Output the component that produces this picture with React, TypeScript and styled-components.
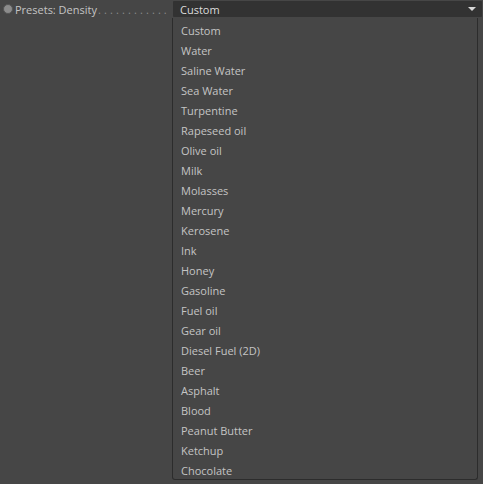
import React from "react";
import styled, { createGlobalStyle } from "styled-components";

const Global = createGlobalStyle`
  html, body { margin: 0; padding: 0; background: #464646; }
  body { width: 483px; height: 484px; overflow: hidden; font-family: "Open Sans", "Noto Sans", sans-serif; }
`;

const Page = styled.div`
  width: 483px;
  height: 484px;
  background: #464646;
  display: flex;
  align-items: flex-start;
  padding-top: 1px;
  box-sizing: border-box;
`;

const LabelArea = styled.div`
  width: 173px;
  height: 16px;
  display: flex;
  align-items: center;
  padding-left: 3px;
  box-sizing: border-box;
  overflow: hidden;
`;

const Dot = styled.span`
  width: 10px;
  height: 10px;
  border-radius: 50%;
  background: #8c8c8c;
  border: 1px solid #555555;
  box-sizing: border-box;
  flex: none;
`;

const Label = styled.span`
  margin-left: 2px;
  font-size: 11px;
  color: #c4c4c4;
  white-space: nowrap;
`;

const Dots = styled.span`
  margin-left: 1px;
  font-size: 11px;
  color: #8a8a8a;
  letter-spacing: 3.1px;
  white-space: nowrap;
`;

const SelectColumn = styled.div`
  display: flex;
  flex-direction: column;
  width: 309px;
`;

const Header = styled.div`
  height: 16px;
  background: #323232;
  display: flex;
  align-items: center;
  justify-content: space-between;
  padding: 0 6px 0 7px;
  color: #dcdcdc;
  font-size: 11px;
  border-radius: 1px;
`;

const Arrow = styled.span`
  width: 0;
  height: 0;
  border-left: 4px solid transparent;
  border-right: 4px solid transparent;
  border-top: 4px solid #d8d8d8;
`;

const Menu = styled.ul`
  list-style: none;
  margin: 1px 0 0 -1px;
  padding: 3px 0 0 0;
  width: 306px;
  height: 462px;
  box-sizing: border-box;
  border: 1px solid #2c2c2c;
  border-top: none;
  border-radius: 0 0 3px 3px;
  background: #464646;
`;

const Item = styled.li`
  height: 20px;
  line-height: 20px;
  padding-left: 8px;
  font-size: 11px;
  color: #c4c4c4;
`;

const items = [
  "Custom", "Water", "Saline Water", "Sea Water", "Turpentine", "Rapeseed oil",
  "Olive oil", "Milk", "Molasses", "Mercury", "Kerosene", "Ink", "Honey",
  "Gasoline", "Fuel oil", "Gear oil", "Diesel Fuel (2D)", "Beer", "Asphalt",
  "Blood", "Peanut Butter", "Ketchup", "Chocolate",
];

export default function App() {
  return (
    <>
      <Global />
      <Page>
        <LabelArea>
          <Dot />
          <Label>Presets: Density</Label>
          <Dots>............</Dots>
        </LabelArea>
        <SelectColumn>
          <Header>
            <span>Custom</span>
            <Arrow />
          </Header>
          <Menu>
            {items.map((it) => (
              <Item key={it}>{it}</Item>
            ))}
          </Menu>
        </SelectColumn>
      </Page>
    </>
  );
}
